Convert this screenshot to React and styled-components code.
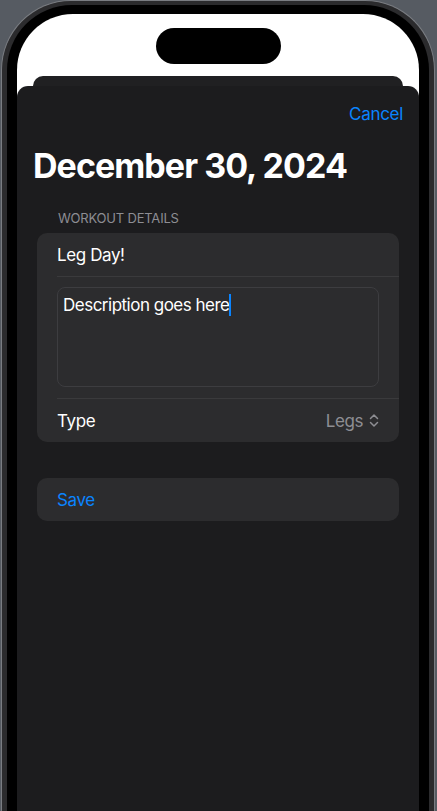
import styled, { createGlobalStyle } from "styled-components";

const GlobalStyle = createGlobalStyle`
  html, body {
    margin: 0;
    padding: 0;
    height: 811px;
    overflow: hidden;
    background: #565b62;
    font-family: Inter, "Noto Sans", sans-serif;
    -webkit-font-smoothing: antialiased;
  }
`;

const ChevronUpDown = () => (
  <svg width="10" height="15" viewBox="0 0 10 15" fill="none">
    <path d="M1.5 5.5 L5 2 L8.5 5.5" stroke="#8e8e93" strokeWidth="1.5" strokeLinecap="round" strokeLinejoin="round" />
    <path d="M1.5 9.5 L5 13 L8.5 9.5" stroke="#8e8e93" strokeWidth="1.5" strokeLinecap="round" strokeLinejoin="round" />
  </svg>
);

const App = () => {
  return (
    <>
      <GlobalStyle />
      <Phone>
        <Bezel>
          <Screen>
            <Island />
            <BackSheet />
            <Sheet>
              <TopBar>
                <LinkButton>Cancel</LinkButton>
              </TopBar>
              <Title>December 30, 2024</Title>
              <Section>
                <SectionHeader>Workout Details</SectionHeader>
                <Card>
                  <Row>
                    <Label>Leg Day!</Label>
                  </Row>
                  <Divider />
                  <EditorRow>
                    <Editor>
                      Description goes here
                      <Caret />
                    </Editor>
                  </EditorRow>
                  <Divider />
                  <Row>
                    <Label>Type</Label>
                    <Picker>
                      Legs
                      <ChevronUpDown />
                    </Picker>
                  </Row>
                </Card>
              </Section>
              <Section $gap={36}>
                <Card>
                  <Row>
                    <Label $accent>Save</Label>
                  </Row>
                </Card>
              </Section>
            </Sheet>
          </Screen>
        </Bezel>
      </Phone>
    </>
  );
};

const Phone = styled.div`
  width: 434px;
  margin: 0 0 0 1px;
  box-sizing: border-box;
  height: 840px;
  border: 1px solid #7a7d82;
  border-bottom: none;
  border-radius: 70px 70px 0 0;
  background: #2b2b2d;
  padding: 4px 5px 0;
  display: flex;
`;

const Bezel = styled.div`
  flex: 1;
  background: #000;
  border-radius: 65px 65px 0 0;
  padding: 9px 10px 0;
  display: flex;
`;

const Screen = styled.div`
  flex: 1;
  background: #fff;
  border-radius: 56px 56px 0 0;
  overflow: hidden;
  display: flex;
  flex-direction: column;
`;

const Island = styled.div`
  width: 125px;
  height: 36px;
  margin: 14px auto 0;
  border-radius: 18px;
  background: #000;
  flex-shrink: 0;
`;

const BackSheet = styled.div`
  height: 10px;
  margin: 12px 16px 0;
  border-radius: 10px 10px 0 0;
  background: #202022;
  flex-shrink: 0;
`;

const Sheet = styled.div`
  flex: 1;
  background: #1c1c1e;
  border-radius: 11px 11px 0 0;
  display: flex;
  flex-direction: column;
`;

const TopBar = styled.div`
  display: flex;
  justify-content: flex-end;
  padding: 17px 16px 0;
`;

const LinkButton = styled.span`
  color: #0a84ff;
  font-size: 17px;
  line-height: 22px;
  letter-spacing: -0.3px;
`;

const Title = styled.h1`
  margin: 20px 16px 0;
  color: #fff;
  font-size: 34px;
  line-height: 41px;
  font-weight: 700;
  letter-spacing: -0.95px;
`;

const Section = styled.div`
  margin: ${({ $gap }) => $gap ?? 23}px 20px 0;
`;

const SectionHeader = styled.div`
  padding: 0 0 6px 21px;
  color: #8d8d93;
  font-size: 13px;
  line-height: 18px;
  text-transform: uppercase;
  letter-spacing: -0.2px;
`;

const Card = styled.div`
  background: #2c2c2e;
  border-radius: 10px;
  overflow: hidden;
`;

const Row = styled.div`
  height: 43px;
  padding: 0 20px;
  display: flex;
  align-items: center;
  justify-content: space-between;
`;

const Label = styled.span`
  color: ${({ $accent }) => ($accent ? "#0a84ff" : "#fff")};
  font-size: 17px;
  letter-spacing: -0.4px;
`;

const Divider = styled.div`
  height: 1px;
  margin-left: 20px;
  background: #3a3a3c;
`;

const EditorRow = styled.div`
  padding: 10px 20px 11px;
`;

const Editor = styled.div`
  height: 100px;
  box-sizing: border-box;
  border: 1px solid #3d3d40;
  border-radius: 8px;
  padding: 6px 5px;
  color: #fff;
  font-size: 17px;
  line-height: 22px;
  letter-spacing: -0.5px;
  display: flex;
  align-items: flex-start;
`;

const Caret = styled.span`
  display: inline-block;
  width: 2px;
  height: 22px;
  background: #0a84ff;
  margin-left: -1px;
`;

const Picker = styled.span`
  display: flex;
  align-items: center;
  gap: 6px;
  color: #8e8e93;
  font-size: 17px;
  letter-spacing: -0.4px;
`;

export default App;
